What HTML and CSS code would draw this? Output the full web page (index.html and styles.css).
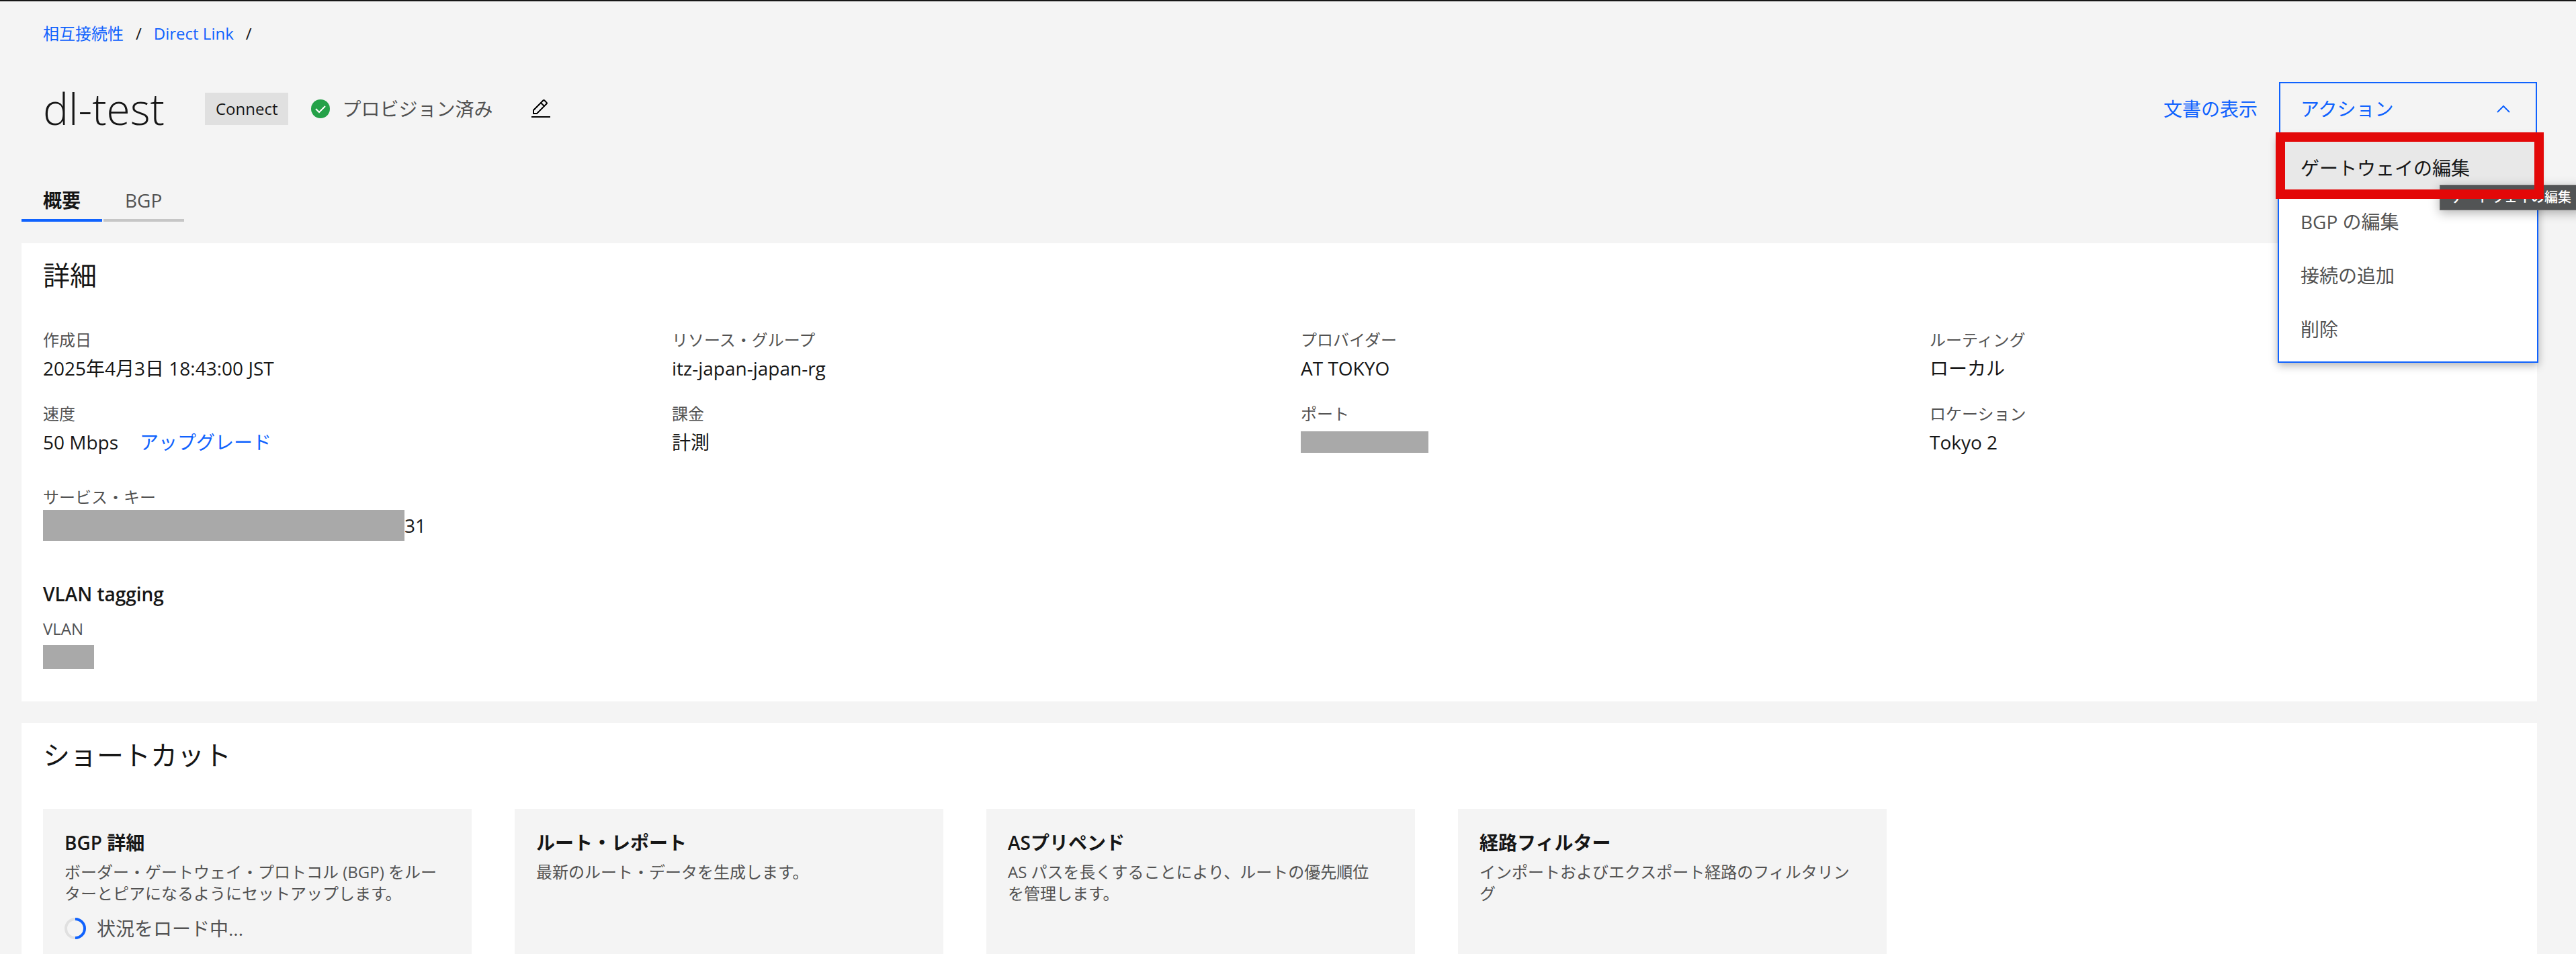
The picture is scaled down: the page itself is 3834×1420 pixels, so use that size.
FILE: index.html
```html
<!DOCTYPE html>
<html lang="ja">
<head>
    <meta charset="UTF-8">
    <meta name="viewport" content="width=device-width, initial-scale=1.0">
    <title>dl-test - Direct Link</title>
    <link rel="stylesheet" href="styles.css">
</head>
<body>

<header class="page-header">
    <nav class="breadcrumb">
        <a href="#">相互接続性</a>
        <span>/</span>
        <a href="#">Direct Link</a>
        <span>/</span>
    </nav>

    <div class="title-row">
        <h1>dl-test</h1>
        <span class="tag">Connect</span>
        <div class="status">
            <svg class="status-icon" viewBox="0 0 28 28">
                <circle cx="14" cy="14" r="14" fill="#24a148"/>
                <path d="M7 14l5 5 9-9" fill="none" stroke="#fff" stroke-width="2"/>
            </svg>
            <span>プロビジョン済み</span>
        </div>
        <button class="edit-button" aria-label="編集">
            <svg viewBox="0 0 32 32">
                <path d="M2 27h28v2H2zM25.4 9c.8-.8.8-2 0-2.800l-3.600-3.600c-.8-.8-2-.8-2.800 0l-15 15V24h6.400l15-15zm-5-5L24 7.600l-3 3L17.400 7l3-3zM6 22v-3.600l10-10 3.600 3.600-10 10H6z"/>
            </svg>
        </button>

        <a class="docs-link" href="#">文書の表示</a>

        <!-- Actions menu -->
        <div class="actions">
            <button class="actions-button" aria-expanded="true">
                <span>アクション</span>
                <svg viewBox="0 0 20 12"><path d="M1 11l9-9 9 9" fill="none" stroke="currentColor" stroke-width="2"/></svg>
            </button>
            <div class="actions-menu">
                <button class="active">ゲートウェイの編集</button>
                <button>BGP の編集</button>
                <button>接続の追加</button>
                <button>削除</button>
                <div class="tooltip">ゲートウェイの編集</div>
                <div class="highlight"></div>
            </div>
        </div>
    </div>

    <div class="tabs">
        <button class="tab selected">概要</button>
        <button class="tab">BGP</button>
    </div>
</header>

<main>
    <!-- Details -->
    <section class="panel">
        <h2>詳細</h2>
        <dl class="details">
            <div><dt>作成日</dt><dd>2025年4月3日 18:43:00 JST</dd></div>
            <div><dt>リソース・グループ</dt><dd>itz-japan-japan-rg</dd></div>
            <div><dt>プロバイダー</dt><dd>AT TOKYO</dd></div>
            <div><dt>ルーティング</dt><dd>ローカル</dd></div>
            <div><dt>速度</dt><dd>50 Mbps <a class="upgrade" href="#">アップグレード</a></dd></div>
            <div><dt>課金</dt><dd>計測</dd></div>
            <div><dt>ポート</dt><dd><span class="mask mask-port"></span></dd></div>
            <div><dt>ロケーション</dt><dd>Tokyo 2</dd></div>
        </dl>
        <dl class="details service-key">
            <div><dt>サービス・キー</dt><dd><span class="mask mask-key"></span>31</dd></div>
        </dl>
        <h3>VLAN tagging</h3>
        <dl class="details">
            <div><dt>VLAN</dt><dd><span class="mask mask-vlan"></span></dd></div>
        </dl>
    </section>

    <!-- Shortcuts -->
    <section class="panel">
        <h2>ショートカット</h2>
        <div class="cards">
            <article class="card">
                <h4>BGP 詳細</h4>
                <p>ボーダー・ゲートウェイ・プロトコル (BGP) をルーターとピアになるようにセットアップします。</p>
                <div class="loading">
                    <svg viewBox="0 0 32 32">
                        <circle cx="16" cy="16" r="14" fill="none" stroke="#e0e0e0" stroke-width="4"/>
                        <path d="M16 2a14 14 0 0 1 0 28" fill="none" stroke="#0f62fe" stroke-width="4"/>
                    </svg>
                    <span>状況をロード中...</span>
                </div>
            </article>
            <article class="card">
                <h4>ルート・レポート</h4>
                <p>最新のルート・データを生成します。</p>
            </article>
            <article class="card">
                <h4>ASプリペンド</h4>
                <p>AS パスを長くすることにより、ルートの優先順位を管理します。</p>
            </article>
            <article class="card">
                <h4>経路フィルター</h4>
                <p>インポートおよびエクスポート経路のフィルタリング</p>
            </article>
        </div>
    </section>
</main>

</body>
</html>
```
FILE: styles.css
```css
* {
    box-sizing: border-box;
}

body {
    font-family: 'Open Sans', 'Noto Sans CJK JP', sans-serif;
    font-size: 28px;
    line-height: 40px;
    background-color: #f4f4f4;
    color: #161616;
    margin: 0;
    border-top: 2px solid #161616;
    height: 100vh;
    overflow: hidden;
}

h1, h2, h3, h4, p, dl, dd {
    margin: 0;
}

a {
    color: #0f62fe;
    text-decoration: none;
}

button {
    font: inherit;
    color: inherit;
    background: none;
    border: none;
    padding: 0;
    cursor: pointer;
}

.page-header {
    padding: 32px 58px 32px 32px;
}

.breadcrumb {
    display: flex;
    gap: 18px;
    padding-left: 32px;
    font-size: 24px;
    line-height: 32px;
}

.title-row {
    display: flex;
    align-items: center;
    height: 80px;
    margin-top: 56px;
    padding-left: 32px;
}

h1 {
    font-size: 64px;
    font-weight: 300;
    line-height: 80px;
}

.tag {
    margin-left: 60px;
    padding: 8px 16px;
    font-size: 24px;
    line-height: 32px;
    background-color: #e0e0e0;
}

.status {
    display: flex;
    align-items: center;
    gap: 18px;
    margin-left: 34px;
    color: #525252;
}

.status-icon {
    width: 28px;
    height: 28px;
}

.edit-button {
    display: flex;
    margin-left: 56px;
}

.edit-button svg {
    width: 32px;
    height: 32px;
}

.docs-link {
    margin-left: auto;
    margin-right: 32px;
}

.actions {
    position: relative;
    width: 384px;
}

.actions-button {
    display: flex;
    justify-content: space-between;
    align-items: center;
    width: 100%;
    height: 80px;
    padding: 0 38px 0 30px;
    border: 2px solid #0f62fe;
    color: #0f62fe;
}

.actions-button svg {
    width: 20px;
    height: 12px;
}

.actions-menu {
    position: absolute;
    top: 80px;
    left: -2px;
    right: -2px;
    z-index: 1;
    padding: 8px 0;
    background-color: #fff;
    border: 2px solid #0f62fe;
    border-top: none;
    box-shadow: 0 4px 12px rgba(0, 0, 0, 0.3);
}

.actions-menu button {
    display: block;
    width: 100%;
    height: 80px;
    padding: 0 32px;
    text-align: left;
    color: #525252;
}

.actions-menu .active {
    background-color: #e8e8e8;
    color: #161616;
}

.tooltip {
    position: absolute;
    top: 73px;
    left: 239px;
    padding: 2px 15px;
    font-size: 20px;
    font-weight: 500;
    line-height: 32px;
    white-space: nowrap;
    background-color: #525455;
    border: 1px solid #6f6f6f;
    color: #fff;
    box-shadow: 0 4px 16px rgba(0, 0, 0, 0.3);
}

.highlight {
    position: absolute;
    top: -5px;
    left: -5px;
    right: -10px;
    height: 99px;
    border: 14px solid #e30808;
}

.tabs {
    display: flex;
    gap: 2px;
    margin-top: 64px;
}

.tab {
    width: 120px;
    padding: 12px 32px 8px;
    border-bottom: 4px solid #c6c6c6;
    text-align: left;
    color: #525252;
}

.tab.selected {
    border-bottom-color: #0f62fe;
    font-weight: 600;
    color: #161616;
}

.panel {
    margin: 0 58px 32px 32px;
    padding: 24px 0 46px;
    background-color: #fff;
}

h2 {
    margin-bottom: 56px;
    padding-left: 32px;
    font-size: 40px;
    font-weight: 400;
    line-height: 48px;
}

h3 {
    margin: 62px 0 16px;
    padding-left: 32px;
    font-size: 28px;
    font-weight: 600;
    line-height: 40px;
}

.details {
    display: grid;
    grid-template-columns: repeat(4, 1fr);
    row-gap: 32px;
}

.details > div {
    padding: 0 32px;
}

.service-key {
    margin-top: 46px;
}

dt {
    margin-bottom: 6px;
    font-size: 24px;
    line-height: 32px;
    color: #525252;
}

dd {
    display: flex;
    align-items: center;
    height: 40px;
}

.upgrade {
    margin-left: 32px;
}

.mask {
    background-color: #a9a9a9;
}

.mask-port {
    width: 190px;
    height: 32px;
}

.mask-key {
    width: 538px;
    height: 46px;
}

.mask-vlan {
    width: 76px;
    height: 36px;
}

.cards {
    display: grid;
    grid-template-columns: repeat(4, 3fr) 4fr;
}

.card {
    min-height: 280px;
    margin: 0 32px;
    padding: 30px 32px;
    background-color: #f4f4f4;
}

h4 {
    font-size: 28px;
    font-weight: 600;
    line-height: 40px;
}

.card p {
    margin-top: 8px;
    padding-right: 18px;
    font-size: 24px;
    line-height: 32px;
    color: #525252;
}

.loading {
    display: flex;
    align-items: center;
    gap: 16px;
    margin-top: 16px;
    color: #525252;
}

.loading svg {
    width: 32px;
    height: 32px;
}
```
